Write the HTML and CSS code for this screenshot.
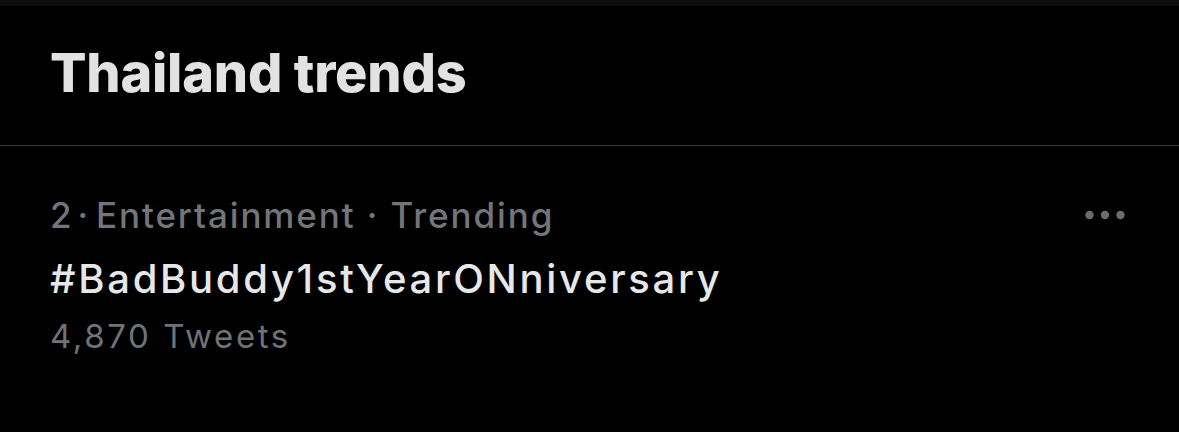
FILE: index.html
```html
<!DOCTYPE html>
<html lang="en">
<head>
<meta charset="utf-8">
<title>Thailand trends</title>
<link rel="stylesheet" href="styles.css">
</head>
<body>
  <div class="topband"></div>
  <header class="section-header">
    <h1 class="title">Thailand trends</h1>
  </header>
  <div class="trend">
    <div class="trend-body">
      <div class="meta">2<span class="sep">·</span>Entertainment · Trending</div>
      <div class="tag">#BadBuddy1stYearONniversary</div>
      <div class="count">4,870 Tweets</div>
    </div>
    <button class="more" aria-label="More">
      <svg width="40" height="10" viewBox="0 0 40 10">
        <circle cx="4.5" cy="5" r="4.2" fill="#6c6c6e"/>
        <circle cx="20" cy="5" r="4.2" fill="#6c6c6e"/>
        <circle cx="35.5" cy="5" r="4.2" fill="#6c6c6e"/>
      </svg>
    </button>
  </div>
</body>
</html>
```
FILE: styles.css
```css
html, body {
  margin: 0;
  padding: 0;
  background: #000;
  height: 100%;
}
body {
  font-family: Inter, "Noto Sans", "Liberation Sans", sans-serif;
  overflow: hidden;
}
.topband {
  height: 6px;
  background: #0d0d0f;
}
.section-header {
  padding: 35px 50px 40px;
  border-bottom: 1px solid #3a3a3c;
}
.title {
  margin: 0;
  font-size: 54px;
  line-height: 64px;
  font-weight: 800;
  color: #e2e2e2;
  letter-spacing: -0.2px;
}
.trend {
  display: flex;
  justify-content: space-between;
  align-items: flex-start;
  padding: 47px 54px 0 50px;
}
.trend-body {
  display: flex;
  flex-direction: column;
}
.meta {
  font-size: 35px;
  line-height: 44px;
  font-weight: 500;
  color: #727579;
  letter-spacing: 1.9px;
}
.sep {
  margin: 0 6px 0 4px;
}
.tag {
  margin-top: 16px;
  font-size: 40px;
  line-height: 51px;
  font-weight: 500;
  color: #e6e7e8;
  letter-spacing: 2.7px;
}
.count {
  margin-top: 10px;
  font-size: 33px;
  line-height: 44px;
  font-weight: 400;
  color: #6f7276;
  letter-spacing: 2.6px;
}
.more {
  margin-top: 17px;
  padding: 0;
  border: 0;
  background: none;
  display: flex;
}
```
